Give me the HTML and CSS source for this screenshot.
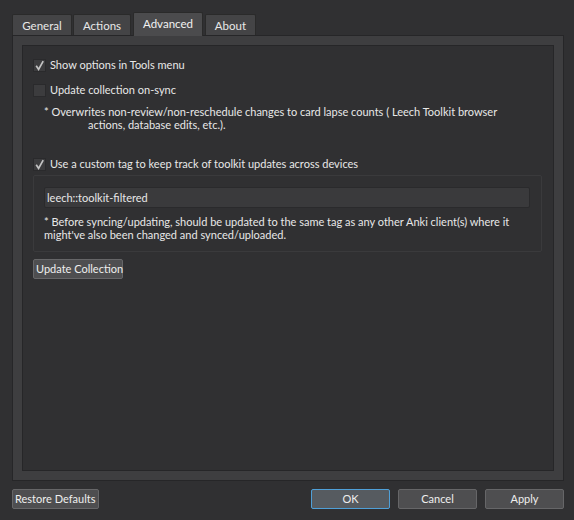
FILE: index.html
```html
<!DOCTYPE html>
<html>
<head>
<meta charset="utf-8">
<link rel="stylesheet" href="styles.css">
</head>
<body>
<div class="dialog">
  <div class="tabs">
    <div class="tab t-general">General</div>
    <div class="tab t-actions">Actions</div>
    <div class="tab tab-active t-advanced">Advanced</div>
    <div class="tab t-about">About</div>
  </div>
  <div class="pane">
    <div class="inner">
      <label class="check-row row1">
        <span class="box"><svg viewBox="0 0 13 13" width="13" height="13"><path d="M3.2 6.8 L5.6 10.4 L10.2 2.2" fill="none" stroke="#c4c4c4" stroke-width="1.7"/></svg></span>
        <span>Show options in Tools menu</span>
      </label>
      <label class="check-row row2">
        <span class="box"></span>
        <span>Update collection on-sync</span>
      </label>
      <div class="note note1">
        <div>* Overwrites non-review/non-reschedule changes to card lapse counts ( Leech Toolkit browser</div>
        <div class="indent">actions, database edits, etc.).</div>
      </div>
      <label class="check-row row3">
        <span class="box"><svg viewBox="0 0 13 13" width="13" height="13"><path d="M3.2 6.8 L5.6 10.4 L10.2 2.2" fill="none" stroke="#c4c4c4" stroke-width="1.7"/></svg></span>
        <span>Use a custom tag to keep track of toolkit updates across devices</span>
      </label>
      <div class="group">
        <div class="input">leech::toolkit-filtered</div>
        <div class="note note2">
          <div>* Before syncing/updating, should be updated to the same tag as any other Anki client(s) where it</div>
          <div>might've also been changed and synced/uploaded.</div>
        </div>
      </div>
      <div class="btn btn-update">Update Collection</div>
    </div>
  </div>
  <div class="footer">
    <div class="btn btn-restore">Restore Defaults</div>
    <div class="spacer"></div>
    <div class="btn btn-main btn-ok">OK</div>
    <div class="btn btn-main">Cancel</div>
    <div class="btn btn-main">Apply</div>
  </div>
</div>
</body>
</html>
```

FILE: styles.css
```css
html, body {
  margin: 0;
  padding: 0;
  background: #303032;
  width: 574px;
  height: 520px;
  overflow: hidden;
}
.dialog {
  font-family: "Lato", "Liberation Sans", sans-serif;
  font-size: 11px;
  color: #e8e8e8;
  padding: 12px 10px 0 12px;
}
.tabs {
  display: flex;
  align-items: flex-end;
  height: 23px;
  gap: 1px;
}
.tab {
  box-sizing: border-box;
  height: 21px;
  background: #444446;
  border: 1px solid #2a2a2a;
  border-bottom: none;
  border-radius: 2px 2px 0 0;
  display: flex;
  align-items: center;
  justify-content: center;
  line-height: 1;
  padding-top: 1px;
  font-size: 11.5px;
}
.t-general { width: 60px; }
.t-actions { width: 58px; }
.t-advanced { width: 70px; margin-left: 1px; margin-right: 1px; }
.t-about { width: 51px; }
.tab-active {
  height: 24px;
  background: #4b4b4d;
  color: #f2f2f2;
  padding-top: 0;
  padding-bottom: 2px;
  position: relative;
  z-index: 1;
  margin-bottom: -1px;
}
.pane {
  box-sizing: border-box;
  width: 552px;
  height: 446px;
  background: #3e3e40;
  border: 1px solid #262628;
  padding: 9px;
}
.inner {
  box-sizing: border-box;
  height: 100%;
  background: #303032;
  border: 1px solid #262628;
  padding: 11px 10px 0 10px;
}
.check-row {
  display: flex;
  align-items: center;
  gap: 4px;
  height: 16px;
  line-height: 16px;
}
.box {
  box-sizing: border-box;
  width: 13px;
  height: 13px;
  background: #3c3c3e;
  border: 1px solid #2a2a2c;
  flex: none;
  display: flex;
}
.box svg { margin: -1px; }
.row2 { margin-top: 9px; }
.note {
  line-height: 13px;
}
.note1 {
  margin-top: 7px;
  padding-left: 11px;
}
.indent { padding-left: 44px; }
.row3 { margin-top: 25px; }
.group {
  box-sizing: border-box;
  margin-top: 3px;
  width: 509px;
  height: 77px;
  border: 1px solid #3a3a3c;
  border-radius: 2px;
  padding: 11px 12px 0 10px;
}
.input {
  box-sizing: border-box;
  height: 21px;
  width: 486px;
  background: #3a3a3c;
  border: 1px solid #2a2a2c;
  border-radius: 2px;
  padding-left: 2px;
  line-height: 19px;
}
.note2 { margin-top: 7px; }
.btn {
  box-sizing: border-box;
  height: 20px;
  background: #4e4e50;
  border: 1px solid #666668;
  border-radius: 2px;
  line-height: 18px;
  color: #eeeeee;
  white-space: nowrap;
}
.btn-update {
  margin-top: 7px;
  width: 90px;
  padding-left: 2px;
}
.footer {
  display: flex;
  margin-top: 8px;
  gap: 8px;
}
.btn-restore {
  width: 87px;
  padding-left: 2px;
}
.spacer { flex: 1; }
.btn-main {
  width: 79px;
  text-align: center;
}
.btn-ok {
  background: #565b60;
  border-color: #4fa0d8;
}
```
